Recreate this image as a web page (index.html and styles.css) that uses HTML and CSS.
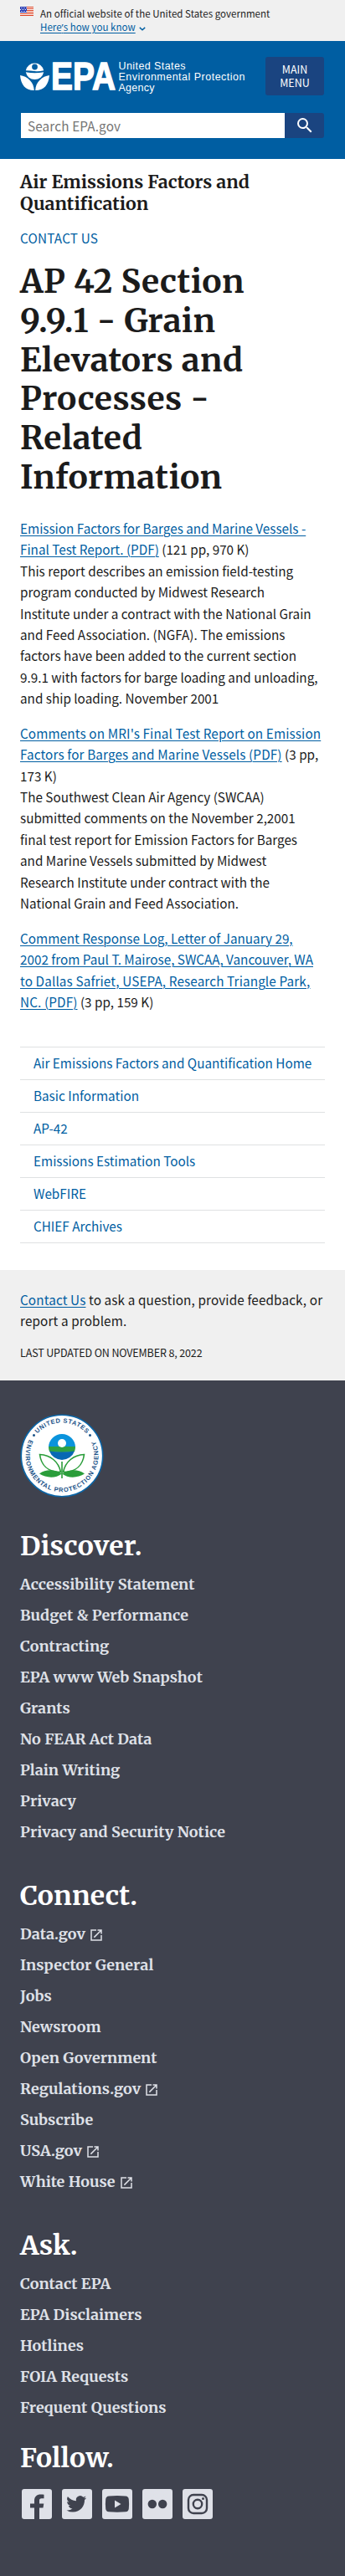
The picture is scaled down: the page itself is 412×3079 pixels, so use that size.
FILE: index.html
```html
<!DOCTYPE html>
<html lang="en">
<head>
<meta charset="utf-8">
<title>AP 42 Section 9.9.1 - Grain Elevators and Processes - Related Information | US EPA</title>
<meta name="viewport" content="width=device-width, initial-scale=1">
<link rel="stylesheet" href="styles.css">
</head>
<body>
<svg class="sprite" aria-hidden="true">
  <symbol id="launch" viewBox="0 0 24 24"><path d="M19 19H5V5h7V3H3v18h18v-9h-2v7zM14 3v2h3.6l-9.8 9.8 1.4 1.4L19 6.4V10h2V3h-7z"/></symbol>
</svg>

<section class="banner">
  <svg class="banner-flag" viewBox="0 0 16 11" width="16" height="11">
    <rect width="16" height="11" fill="#fff"/>
    <path d="M0 .5h16M0 2.5h16M0 4.5h16M0 6.5h16M0 8.5h16M0 10.5h16" stroke="#db3e1f"/>
    <rect width="8" height="7" fill="#1e33b1"/>
    <path d="M1 1.5h7M0 3.5h7M1 5.5h7" stroke="#fff" stroke-dasharray="1 1"/>
  </svg>
  <div class="banner-text">
    <p>An official website of the United States government</p>
    <p><a href="#" class="banner-link">Here<span class="apostrophe">’</span>s how you know</a><svg class="chevron" viewBox="0 0 10 6" width="8" height="5"><path d="M1 1l4 3.5L9 1" fill="none" stroke="#005ea2" stroke-width="1.8"/></svg></p>
  </div>
</section>

<header class="header">
  <div class="header-top">
    <svg class="logo" viewBox="0 0 270 40" width="270" height="40">
      <g fill="#fff">
        <path d="M6.800 12.300a10.900 10.900 0 0 1 21.400 0q-5.500 1.400-10.700.8t-10.700-.8z"/>
        <path d="M6.800 14.300q5.500 1 10.700 1t10.700-1a10.900 10.900 0 0 1-21.400 0z"/>
        <path d="M0 18C8.500 19 16.500 26 16.800 36 6 36 1 29 0 18zM35 18C26.500 19 18.500 26 18.200 36 29 36 34 29 35 18z"/>
        <text class="logo-epa" x="37" y="34.800" textLength="77" lengthAdjust="spacingAndGlyphs">EPA</text>
        <g class="logo-name">
          <text x="117.500" y="11.200" textLength="80">United States</text>
          <text x="117.500" y="23.900" textLength="151">Environmental Protection</text>
          <text x="117.500" y="36.500" textLength="43">Agency</text>
        </g>
      </g>
      <circle cx="17.500" cy="8" r="3.400" fill="#005ea2"/>
    </svg>
    <button class="menu-button" type="button">MAIN<br>MENU</button>
  </div>
  <form class="search">
    <input class="search-input" type="text" placeholder="Search EPA.gov">
    <button class="search-button" type="button" aria-label="Search">
      <svg viewBox="0 0 24 24" width="24" height="24" fill="#fff"><path d="M15.5 14h-.79l-.28-.27A6.471 6.471 0 0 0 16 9.500 6.500 6.500 0 1 0 9.500 16c1.610 0 3.090-.59 4.230-1.570l.27.28v.79l5 4.990L20.490 19l-4.990-5zm-6 0C7.010 14 5 11.990 5 9.500S7.010 5 9.500 5 14 7.010 14 9.500 11.990 14 9.500 14z"/></svg>
    </button>
  </form>
</header>

<main class="main">
  <h2 class="site-title">Air Emissions Factors and<br>Quantification</h2>
  <a href="#" class="contact-link">CONTACT US</a>
  <h1 class="title">AP 42 Section<br>9.9.1 - Grain<br>Elevators and<br>Processes -<br>Related<br>Information</h1>
  <p class="text"><a href="#">Emission Factors for Barges and Marine Vessels -<br>Final Test Report. (PDF)</a> (121 pp, 970 K)<br>This report describes an emission field-testing<br>program conducted by Midwest Research<br>Institute under a contract with the National Grain<br>and Feed Association. (NGFA). The emissions<br>factors have been added to the current section<br>9.9.1 with factors for barge loading and unloading,<br>and ship loading. November 2001</p>
  <p class="text"><a href="#"><span class="loose">Comments on MRI's Final Test Report on Emission<br>Factors for Barges and Marine Vessels (PDF)</span></a> (3 pp,<br>173 K)<br>The Southwest Clean Air Agency (SWCAA)<br>submitted comments on the November 2,2001<br>final test report for Emission Factors for Barges<br>and Marine Vessels submitted by Midwest<br>Research Institute under contract with the<br>National Grain and Feed Association.</p>
  <p class="text"><a href="#">Comment Response Log, Letter of January 29,<br>2002 from Paul T. Mairose, SWCAA, Vancouver, WA<br><span class="loose">to Dallas Safriet, USEPA, Research Triangle Park,<br>NC. (PDF)</span></a> (3 pp, 159 K)</p>
  <ul class="sidenav">
    <li><a href="#">Air Emissions Factors and Quantification Home</a></li>
    <li><a href="#">Basic Information</a></li>
    <li><a href="#">AP-42</a></li>
    <li><a href="#">Emissions Estimation Tools</a></li>
    <li><a href="#">WebFIRE</a></li>
    <li><a href="#">CHIEF Archives</a></li>
  </ul>
</main>

<section class="feedback">
  <p class="text loose"><a href="#">Contact Us</a> to ask a question, provide feedback, or<br>report a problem.</p>
  <p class="updated">LAST UPDATED ON NOVEMBER 8, 2022</p>
</section>

<footer class="footer">
  <svg class="seal" viewBox="0 0 100 100" width="100" height="100">
    <defs>
      <path id="arc-top" d="M10.500 50a39.500 39.500 0 0 1 79 0"/>
      <path id="arc-bottom" d="M12.500 28a43.400 43.400 0 1 0 75 0"/>
    </defs>
    <circle cx="50" cy="50" r="48.700" fill="#fff" stroke="#0b66a8" stroke-width="1.600"/>
    <g class="seal-text">
      <text><textPath href="#arc-top" startOffset="50%" text-anchor="middle" textLength="66">UNITED STATES</textPath></text>
      <text><textPath href="#arc-bottom" startOffset="3" textLength="174">ENVIRONMENTAL PROTECTION AGENCY</textPath></text>
    </g>
    <circle cx="16.500" cy="25.500" r="1.500" fill="#1a5288"/><circle cx="83.500" cy="25.500" r="1.500" fill="#1a5288"/>
    <path d="M34 40a16 16 0 0 1 32 0z" fill="#0a93dc"/>
    <path d="M34 39h32a16 16 0 0 1-1 6q-15 2-30 0a16 16 0 0 1-1-6z" fill="#2ea043"/>
    <path d="M35 44.500q15 2 30 0a16 16 0 0 1-30 0z" fill="#0868b3"/>
    <circle cx="50" cy="35" r="5" fill="#fff"/>
    <g fill="none" stroke="#2a9d3a" stroke-width="1.600">
      <path d="M23.500 48.500c1.500 12 9 21 25 21C46 57 36 49 23.500 48.500zM76.500 48.500c-1.500 12-9 21-25 21C54 57 64 49 76.500 48.500z"/>
      <path d="M50 57v20"/>
    </g>
    <path d="M23 71.500c8-6 19-5 27 0-8 6-19 5-27 0zM77 71.500c-8-6-19-5-27 0 8 6 19 5 27 0z" fill="#2a9d3a"/>
  </svg>

  <section class="group">
    <h2>Discover.</h2>
    <ul>
      <li>Accessibility Statement</li>
      <li>Budget &amp; Performance</li>
      <li>Contracting</li>
      <li>EPA www Web Snapshot</li>
      <li>Grants</li>
      <li>No FEAR Act Data</li>
      <li>Plain Writing</li>
      <li>Privacy</li>
      <li>Privacy and Security Notice</li>
    </ul>
  </section>
  <section class="group">
    <h2>Connect.</h2>
    <ul>
      <li>Data.gov<svg class="ext"><use href="#launch"/></svg></li>
      <li>Inspector General</li>
      <li>Jobs</li>
      <li>Newsroom</li>
      <li>Open Government</li>
      <li>Regulations.gov<svg class="ext"><use href="#launch"/></svg></li>
      <li>Subscribe</li>
      <li>USA.gov<svg class="ext"><use href="#launch"/></svg></li>
      <li>White House<svg class="ext"><use href="#launch"/></svg></li>
    </ul>
  </section>
  <section class="group">
    <h2>Ask.</h2>
    <ul>
      <li>Contact EPA</li>
      <li>EPA Disclaimers</li>
      <li>Hotlines</li>
      <li>FOIA Requests</li>
      <li>Frequent Questions</li>
    </ul>
  </section>
  <section class="follow">
    <h2>Follow.</h2>
    <div class="social">
      <svg viewBox="0 0 36 36"><rect width="36" height="36" rx="3"/><path class="ink" d="M15 36V22.500h-5v-5h5v-3.500c0-5 3-7.500 7.500-7.500 1.500 0 3 .1 4 .3v4.500h-2.800c-2.200 0-2.700 1-2.700 2.700v3.500h5.300l-.8 5H21V36z"/></svg>
      <svg viewBox="0 0 36 36"><rect width="36" height="36" rx="3"/><path class="ink" transform="translate(5.500 5.500)" d="M23.600 4.900a9.800 9.800 0 0 1-2.800.8 4.900 4.900 0 0 0 2.200-2.700 9.900 9.900 0 0 1-3.100 1.200 4.900 4.900 0 0 0-8.400 4.500A13.900 13.900 0 0 1 1.400 3.600a4.900 4.900 0 0 0 1.500 6.500 4.900 4.900 0 0 1-2.200-.6 4.900 4.900 0 0 0 3.900 4.900 4.900 4.900 0 0 1-2.200.1 4.900 4.900 0 0 0 4.600 3.400A9.900 9.900 0 0 1 0 19.900a13.900 13.900 0 0 0 7.500 2.200c9.100 0 14.300-7.700 14-14.600a10 10 0 0 0 2.100-2.600z"/></svg>
      <svg viewBox="0 0 36 36"><rect width="36" height="36" rx="3"/><path class="ink" d="M8 8.500q10-1 20 0 3.500.3 3.800 4 .6 5.500 0 11-.3 3.500-3.800 3.800-10 .8-20 0-3.500-.3-3.800-3.800-.6-5.500 0-11 .3-3.700 3.800-4z"/><path d="M15 13.500v9l7.500-4.500z"/></svg>
      <svg viewBox="0 0 36 36"><rect width="36" height="36" rx="3"/><circle class="ink" cx="11.800" cy="18" r="5.200"/><circle class="ink" cx="24.200" cy="18" r="5.200"/></svg>
      <svg viewBox="0 0 36 36"><rect width="36" height="36" rx="3"/><rect class="line" x="7" y="7" width="22" height="22" rx="6"/><circle class="line" cx="18" cy="18" r="5.200"/><circle class="ink" cx="24.500" cy="11.500" r="1.500"/></svg>
    </div>
  </section>
</footer>
</body>
</html>
```
FILE: styles.css
```css
* { box-sizing: border-box; }
body {
  margin: 0;
  background: #fff;
  color: #1b1b1b;
  font-family: "Source Sans Pro", "Noto Sans CJK SC", sans-serif;
  font-size: 15.27px;
  line-height: 25.44px;
}
h1, h2, p, ul { margin: 0; padding: 0; }
h1, h2, .group li { font-family: Merriweather, "DejaVu Serif Condensed", "DejaVu Serif", serif; font-weight: 700; white-space: nowrap; }
ul { list-style: none; }
a { color: #005ea2; text-underline-offset: 2px; text-decoration-thickness: 1px; }
.sprite { display: none; }

.banner { display: flex; gap: 8px; height: 49px; padding: 8px 24px 0; background: #f0f0f0; }
.banner-flag { flex: none; }
.banner-text { font-size: 11.5px; line-height: 16px; letter-spacing: .03px; white-space: nowrap; }
.apostrophe { font-family: "Noto Sans", sans-serif; line-height: 1; }
.chevron { margin-left: 4px; }

.header { height: 141px; padding: 19px 25px 0 24px; background: #005ea2; }
.header-top { display: flex; justify-content: space-between; height: 67px; }
.logo { flex: none; margin-top: 4px; }
.logo-epa { font: 700 47px "Liberation Sans", Arial, sans-serif; stroke: #fff; stroke-width: 1.5px; }
.logo-name { font: 12.5px "Liberation Sans", Arial, sans-serif; }
.menu-button {
  width: 70px; height: 46px; padding: 0; border: 0; border-radius: 3px;
  background: #1a4480; color: #fff; font: inherit; font-size: 12.5px; line-height: 16px; flex: none;
}
.search { display: flex; height: 30px; }
.search-input {
  flex: 1; min-width: 0; margin: 0 0 0 1px; border: 0; border-radius: 0; padding: 0 8px;
  background: #fff; font: inherit; line-height: 30px; letter-spacing: .15px;
}
.search-input::placeholder { color: #757575; opacity: 1; }
.search-button {
  display: flex; align-items: center; justify-content: center;
  width: 47px; padding: 0; border: 0; border-radius: 0 3px 3px 0; background: #1a4480;
}

.main { display: flex; flex-direction: column; height: 1328px; padding: 15px 24px 0; }
.site-title { font-size: 21.280px; line-height: 26px; letter-spacing: .05px; }
.contact-link { margin-top: 14px; line-height: 26px; letter-spacing: .2px; text-decoration: none; }
.title { margin: 17px 0 24px; font-size: 39.040px; line-height: 46.800px; letter-spacing: .4px; }
.text { white-space: nowrap; }
.loose { letter-spacing: .13px; }
.main .text { margin-bottom: 16px; }
.sidenav { margin-top: 25px; border-top: 1px solid #dfe1e2; }
.sidenav li { height: 39px; padding: 6px 16px; border-bottom: 1px solid #dfe1e2; white-space: nowrap; }
.sidenav a { text-decoration: none; }

.feedback { height: 132px; padding: 23px 24px 0; background: #f0f0f0; }
.updated { margin-top: 14px; font-size: 12.500px; line-height: 22px; letter-spacing: -.13px; white-space: nowrap; }

.footer { height: 1429px; padding: 40px 24px 0; background: #3f424e; color: #dfe1e8; }
.seal { display: block; }
.seal-text { font: 700 7.500px "Liberation Sans", Arial, sans-serif; fill: #1a5288; }
.footer h2 { height: 38px; color: #fff; font-size: 31.920px; line-height: 38px; letter-spacing: .2px; }
.group { margin-top: 39px; }
.group ul { padding-top: 8px; }
.group li { display: flex; align-items: center; height: 37px; font-size: 17.960px; line-height: 37px; letter-spacing: .07px; }
.ext { width: 18px; height: 18px; margin: 3px 0 0 4px; fill: currentColor; }
.follow { margin-top: 23px; }
.social { display: flex; gap: 12px; padding: 18px 2px; }
.social svg { width: 36px; height: 36px; fill: #dfe1e8; }
.social .ink { fill: #3f424e; }
.social .line { fill: none; stroke: #3f424e; stroke-width: 2.400; }
```
